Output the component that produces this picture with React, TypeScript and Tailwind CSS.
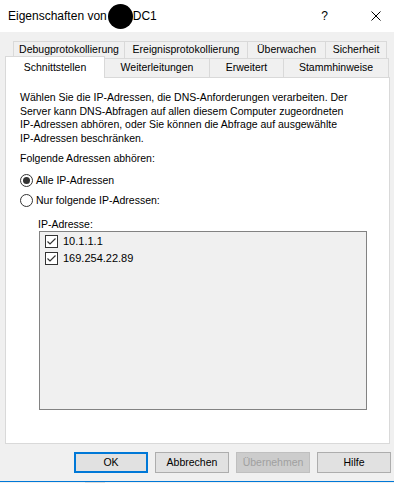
import React from 'react';

const font = { fontFamily: '"Liberation Sans", Arial, sans-serif' };

function Radio({ checked, label }: { checked?: boolean; label: string }) {
  return (
    <div className="flex h-[20px] items-center">
      <span className="flex h-[13px] w-[13px] items-center justify-center rounded-full border border-[#333333] bg-white">
        {checked && <span className="h-[7px] w-[7px] rounded-full bg-[#333333]" />}
      </span>
      <span className="ml-[3px]">{label}</span>
    </div>
  );
}

function CheckItem({ label }: { label: string }) {
  return (
    <div className="flex h-[17px] items-center">
      <span className="flex h-[13px] w-[13px] items-center justify-center border border-[#333333] bg-white">
        <svg width="11" height="11" viewBox="0 0 11 11">
          <path d="M1.5 5.5 L4 8 L9.5 2.5" fill="none" stroke="#333333" strokeWidth="1.2" />
        </svg>
      </span>
      <span className="ml-[5px] text-[11px]">{label}</span>
    </div>
  );
}

function Btn({ children, primary, disabled }: { children: React.ReactNode; primary?: boolean; disabled?: boolean }) {
  let cls = 'flex h-[21px] w-[74px] items-center justify-center border ';
  if (primary) cls += 'border-2 border-[#0078d7] bg-[#e1e1e1] text-black';
  else if (disabled) cls += 'border-[#bfbfbf] bg-[#cccccc] text-[#a0a0a0]';
  else cls += 'border-[#adadad] bg-[#e1e1e1] text-black';
  return <div className={cls}>{children}</div>;
}

export default function App() {
  const topTabs = [
    { label: 'Debugprotokollierung', w: 'w-[112px]' },
    { label: 'Ereignisprotokollierung', w: 'w-[124px]' },
    { label: 'Überwachen', w: 'w-[79px]' },
    { label: 'Sicherheit', w: 'w-[62px]' },
  ];
  const bottomTabs = [
    { label: 'Weiterleitungen', w: 'w-[106px]' },
    { label: 'Erweitert', w: 'w-[75px]' },
    { label: 'Stammhinweise', w: 'w-[106px]' },
  ];

  return (
    <div className="h-[483px] w-[394px] overflow-hidden bg-[#f0f0f0] text-[10.5px] text-black" style={font}>
      {/* title bar */}
      <div className="flex h-[32px] items-center bg-white">
        <span className="ml-[8px] text-[12px]">Eigenschaften von</span>
        <span className="ml-[1px] h-[25px] w-[25px] rounded-full bg-black" />
        <span className="text-[12px]">DC1</span>
        <span className="ml-auto mr-[43px] text-[12px]">?</span>
        <svg className="mr-[13px]" width="10" height="10" viewBox="0 0 10 10">
          <path d="M0.5 0.5 L9.5 9.5 M9.5 0.5 L0.5 9.5" stroke="#000" strokeWidth="1" />
        </svg>
      </div>

      {/* tabs */}
      <div className="mt-[9px] ml-[13px] flex h-[17px]">
        {topTabs.map((t, i) => (
          <div
            key={t.label}
            className={`flex ${t.w} ${i > 0 ? '-ml-px' : ''} items-center justify-center border border-b-0 border-[#d9d9d9] bg-[#f0f0f0]`}
          >
            {t.label}
          </div>
        ))}
      </div>
      <div className="relative z-10 ml-[5px] flex h-[19px] items-end">
        <div className="relative z-10 -mb-px flex h-[22px] w-[100px] items-start justify-center border border-b-0 border-[#d9d9d9] bg-white pt-[3px]">
          Schnittstellen
        </div>
        {bottomTabs.map((t) => (
          <div
            key={t.label}
            className={`-ml-px flex h-[19px] ${t.w} items-center justify-center border border-b-0 border-[#d9d9d9] bg-[#f0f0f0]`}
          >
            {t.label}
          </div>
        ))}
      </div>

      {/* panel */}
      <div className="ml-[5px] h-[367px] w-[385px] border border-[#d9d9d9] bg-white pl-[14px] pt-[13px]">
        <p className="leading-[13.5px]">
          Wählen Sie die IP-Adressen, die DNS-Anforderungen verarbeiten. Der
          <br />
          Server kann DNS-Abfragen auf allen diesem Computer zugeordneten
          <br />
          IP-Adressen abhören, oder Sie können die Abfrage auf ausgewählte
          <br />
          IP-Adressen beschränken.
        </p>
        <div className="mt-[7px] leading-[13.5px]">Folgende Adressen abhören:</div>
        <div className="mt-[5px]">
          <Radio checked label="Alle IP-Adressen" />
          <Radio label="Nur folgende IP-Adressen:" />
        </div>
        <div className="ml-[18px] mt-[6px] h-[14px] leading-[14px]">IP-Adresse:</div>
        <div className="ml-[19px] h-[179px] w-[328px] border border-[#828282] bg-[#f0f0f0] pl-[5px] pt-[1px]">
          <CheckItem label="10.1.1.1" />
          <CheckItem label="169.254.22.89" />
        </div>
      </div>

      {/* buttons */}
      <div className="ml-[74px] mt-[8px] flex gap-[7px]">
        <Btn primary>OK</Btn>
        <Btn>Abbrechen</Btn>
        <Btn disabled>Übernehmen</Btn>
        <Btn>Hilfe</Btn>
      </div>

      <div className="mt-[8px] h-px bg-[#0078d7]" />
      <div className="ml-[85px] h-[2px] w-[20px] bg-[#d9d9d9]" />
    </div>
  );
}
